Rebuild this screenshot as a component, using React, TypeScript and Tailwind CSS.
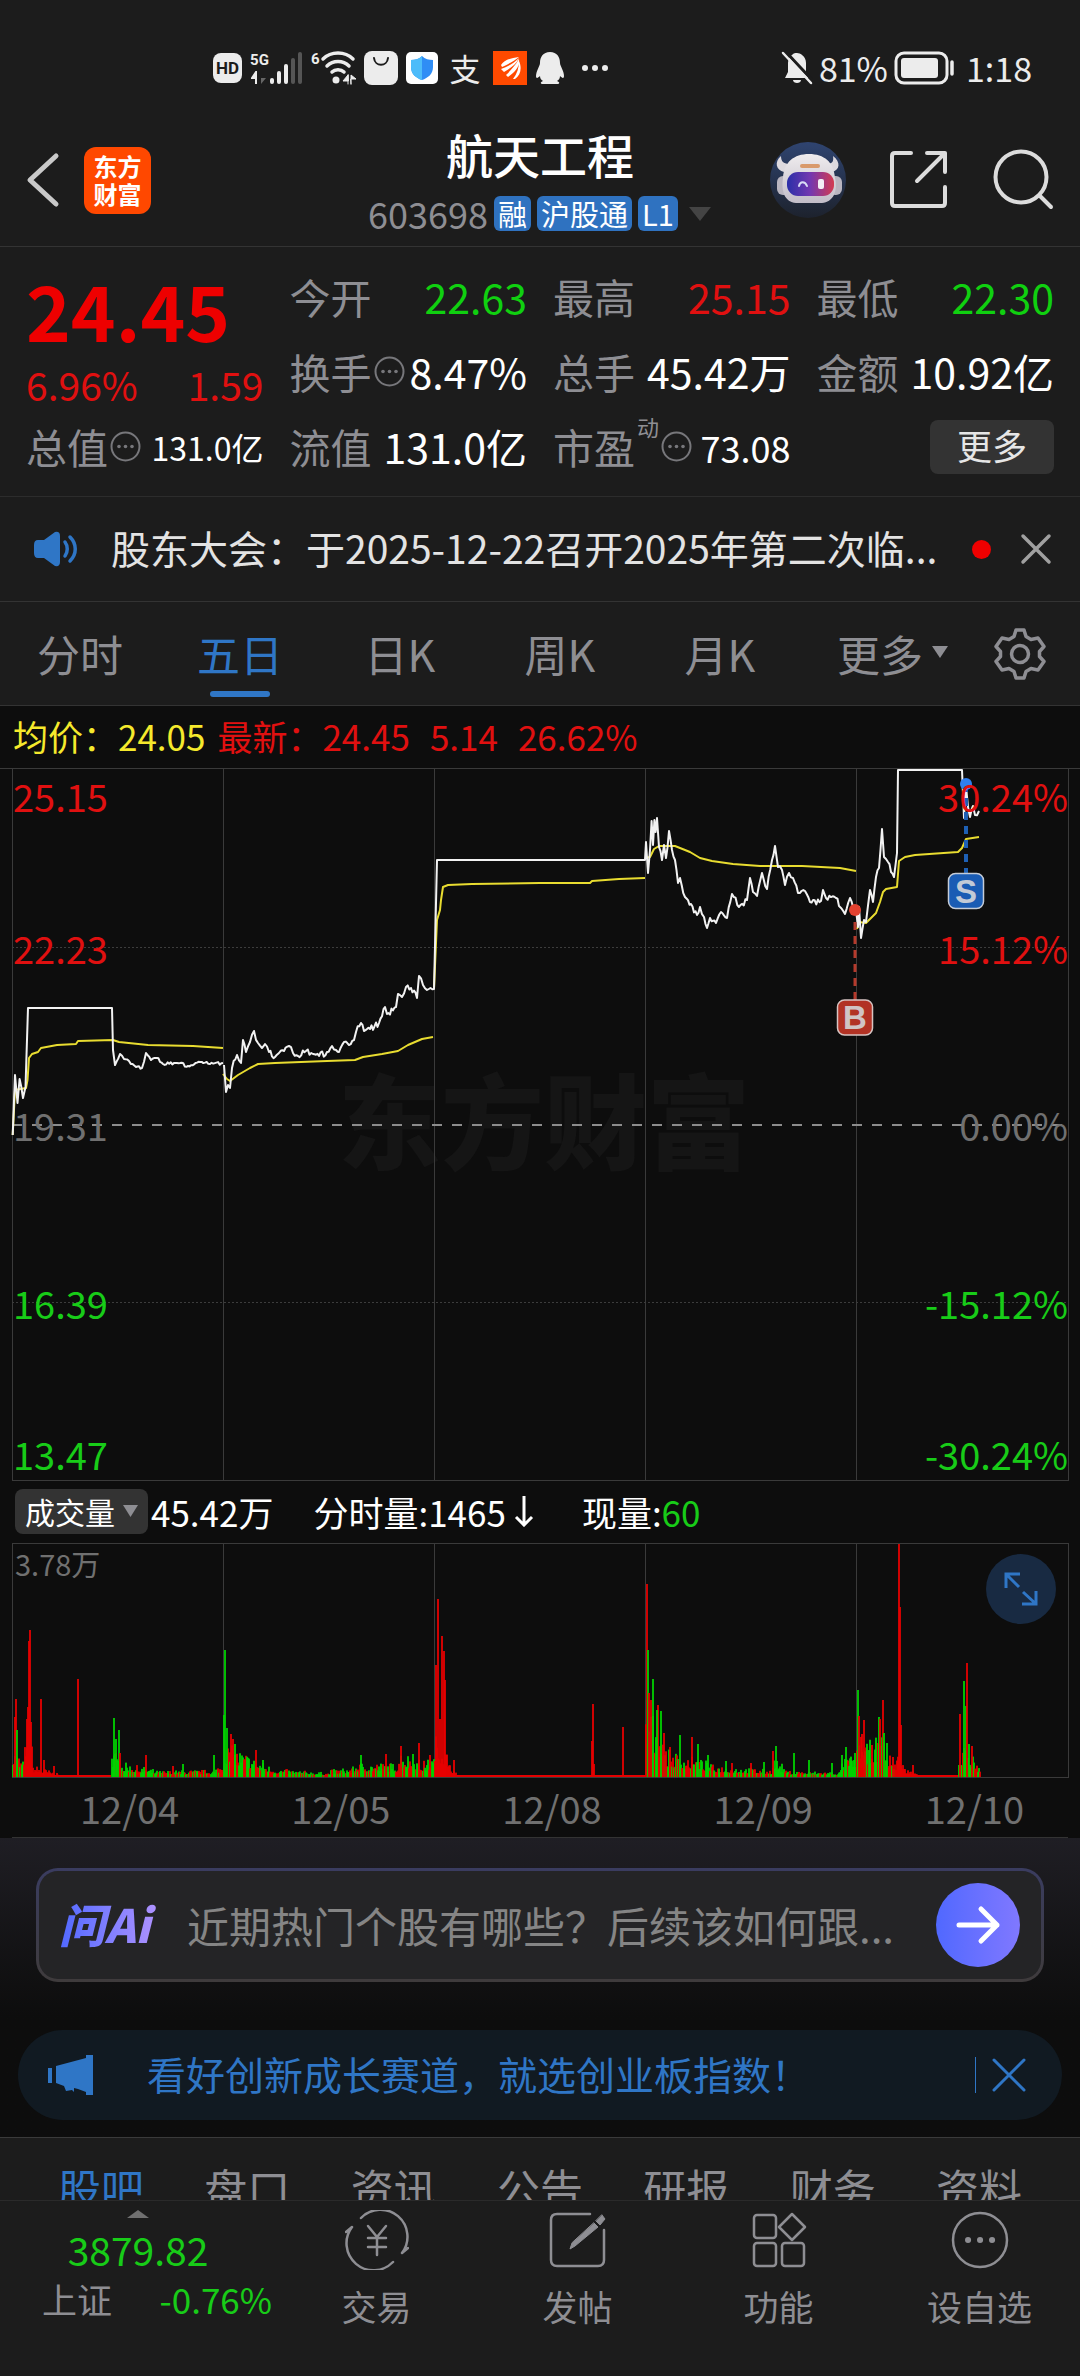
import { clsx } from "clsx";
import type { ReactNode, SVGProps } from "react";

type Point = [number, number];

const UP = "#e60000";
const DOWN = "#00d200";

// Small deterministic generator so the intraday noise is stable between renders
const createRandom = (seed: number) => {
  let s = seed;
  return () => {
    s = (s * 16807) % 2147483647;
    return s / 2147483647;
  };
};

/* ------------------------------ chart data ------------------------------ */

const PRICE_DAYS: Point[][] = [
  [[12.7, 367], [15, 307], [17.5, 335], [19.6, 311], [23, 330], [25.5, 319], [28, 240], [112, 240], [113, 282], [115, 297], [120, 286], [124, 291], [129, 293], [136, 299], [142, 300], [146, 285], [151, 292], [157, 290], [163, 296], [177, 295], [188, 298], [200, 294], [210, 296], [223, 295]],
  [[224, 297], [226, 324], [228, 317], [230, 320], [232, 300], [237, 287], [241, 295], [243, 272], [246, 284], [250, 274], [254, 263], [258, 275], [262, 280], [265, 276], [269, 284], [275, 289], [279, 285], [284, 283], [289, 278], [293, 285], [298, 288], [306, 283], [313, 286], [319, 288], [327, 284], [332, 278], [336, 282], [339, 284], [344, 274], [349, 277], [354, 272], [356, 264], [361, 255], [364, 263], [370, 261], [379, 255], [385, 239], [387, 246], [396, 239], [398, 226], [402, 229], [406, 219], [411, 220], [417, 230], [419, 208], [423, 217], [427, 222], [434, 221], [437, 92], [645, 92], [646, 74], [648, 105], [650, 82], [651.6, 53], [653, 77], [654.4, 52], [655.6, 64], [657, 50], [659, 79], [662, 92], [664, 77], [666, 90], [669, 63], [672, 82], [675, 92], [678, 115], [680, 110], [685, 129], [691, 136], [697, 147], [700, 139], [704, 149], [707, 160], [710, 150], [716, 155], [721, 144], [727, 150], [732, 126], [739, 139], [747, 132], [750, 110], [753, 124], [757, 128], [762, 105], [767, 121], [772, 92], [775, 78], [778, 99], [782, 102], [785, 117], [789, 105], [793, 110], [798, 125], [805, 123], [810, 134], [821, 133], [823, 122], [826, 130], [836, 130], [845, 146], [850, 130], [853, 139], [856, 142], [858, 159], [859, 139], [861, 170], [864, 152], [866, 154], [870, 122], [873, 134], [876, 109], [879, 100], [882, 61], [884, 89], [888, 94], [891, 104], [894, 109], [897, 85], [898, 2], [962, 2], [964, 50], [966, 18], [968, 39], [970, 49], [973, 38], [975, 47], [979, 43]],
];

const AVERAGE_DAYS: Point[][] = [
  [[12.7, 367], [15, 322], [26, 320], [27.5, 312], [29, 290], [32, 286], [38, 284], [41, 280], [57, 277], [76, 276], [78, 273], [113, 272], [119, 274], [148, 277], [193, 278], [223, 280]],
  [[223, 306], [227, 311], [230, 313], [238, 307], [250, 300], [258, 296], [275, 295], [327, 293], [355, 292], [363, 289], [382, 286], [398, 283], [408, 277], [422, 271], [433, 269]],
  [[434, 221], [437, 152], [440, 142], [441, 132], [443, 119], [448, 117], [472, 116], [540, 115], [590, 115], [592, 113], [619, 111], [645, 110]],
  [[645, 90], [650, 89], [654, 81], [659, 78], [675, 78], [690, 84], [700, 90], [712, 93], [733, 96], [760, 98], [802, 98], [840, 100], [856, 103]],
  [[857, 161], [859, 154], [866, 155], [876, 145], [880, 134], [883, 124], [886, 121], [897, 119], [899, 93], [905, 89], [915, 87], [958, 84], [962, 80], [966, 71], [979, 69]],
];

// from x, to x, start height, end height, share of rising minutes
const VOLUME_RANGES: [number, number, number, number, number][] = [
  [12, 23, 30, 14, 0.4], [23, 32, 30, 30, 1], [32, 58, 12, 3, 1], [58, 110, 2, 2, 1],
  [111, 121, 26, 18, 0.2], [121, 155, 14, 7, 0.4], [155, 215, 6, 7, 0.5], [215, 224, 9, 14, 0.5],
  [224, 252, 32, 20, 0.45], [252, 275, 18, 8, 0.4], [275, 330, 8, 4, 0.4], [330, 355, 7, 10, 0.4],
  [355, 398, 14, 13, 0.5], [398, 420, 26, 16, 0.5], [420, 434, 14, 20, 0.5], [434, 447, 40, 25, 1],
  [447, 456, 14, 5, 1], [456, 645, 2, 2, 1], [645, 664, 70, 40, 0.5], [664, 710, 26, 14, 0.5],
  [710, 772, 12, 7, 0.5], [772, 785, 20, 9, 0.4], [785, 840, 6, 5, 0.4], [840, 857, 14, 26, 0.3],
  [857, 868, 50, 26, 0.6], [868, 885, 34, 40, 0.6], [885, 896, 24, 14, 0.5], [896, 903, 30, 16, 1],
  [903, 918, 9, 4, 1], [918, 958, 2, 2, 1], [958, 968, 24, 34, 0.4], [968, 980, 26, 8, 0.5],
];

// x, height, rising
const VOLUME_SPIKES: [number, number, boolean][] = [
  [14, 60, true], [15, 78, true], [16, 47, false], [26, 58, true], [27, 70, true], [28, 136, true], [29, 147, true], [30, 55, true],
  [40, 78, true], [43, 17, true], [53, 11, true], [77, 98, true], [113, 59, false], [115, 38, false], [118, 47, false], [119, 24, true],
  [145, 22, true], [172, 11, true], [182, 13, false], [213, 22, false], [223, 62, false], [224, 127, false], [226, 49, false],
  [230, 43, true], [232, 38, true], [234, 33, false], [255, 27, true], [262, 17, false], [360, 22, false], [385, 23, true],
  [400, 31, true], [412, 23, false], [418, 34, true], [429, 22, true], [435, 112, true], [437, 178, true], [439, 58, true],
  [441, 141, true], [443, 126, true], [444, 97, true], [453, 17, true], [592, 73, true], [593, 13, true], [591, 36, true],
  [622, 50, true], [646, 193, true], [647, 127, false], [648, 84, true], [650, 77, true], [652, 98, false], [657, 72, true],
  [656, 67, false], [660, 66, false], [663, 44, true], [669, 30, true], [679, 42, false], [691, 40, true], [697, 33, false],
  [707, 22, false], [725, 16, false], [731, 14, true], [750, 14, true], [763, 15, false], [772, 26, true], [775, 31, false],
  [793, 24, false], [808, 17, false], [831, 14, false], [841, 22, false], [845, 30, false], [857, 87, false], [858, 61, true],
  [863, 57, true], [861, 43, true], [871, 32, true], [878, 60, false], [879, 58, true], [882, 77, true], [883, 44, false],
  [886, 34, false], [892, 20, true], [898, 233, true], [899, 170, true], [900, 52, true], [912, 12, true], [959, 63, true],
  [963, 96, false], [965, 71, false], [966, 114, true], [968, 33, false], [971, 31, true],
];

const buildPrice = (points: Point[]) => {
  const rand = createRandom(42);
  const out: Point[] = [];
  points.forEach((p, i) => {
    out.push(p);
    const next = points[i + 1];
    if (!next) return;
    const dx = next[0] - p[0];
    if (dx < 3 || dx > 50) return;
    const swing = p[0] < 223 ? 3 : 6;
    const steps = Math.floor(dx / 1.5);
    for (let k = 1; k < steps; k++) {
      const t = k / steps;
      out.push([p[0] + dx * t, p[1] + (next[1] - p[1]) * t + (rand() - 0.5) * swing]);
    }
  });
  return out;
};

const toPath = (points: Point[]) =>
  points.map(([x, y], i) => `${i ? "L" : "M"}${x.toFixed(1)} ${y.toFixed(1)}`).join("");

const buildVolume = () => {
  const rand = createRandom(7);
  const bars: [number, number, boolean][] = [];
  VOLUME_RANGES.forEach(([x0, x1, h0, h1, up]) => {
    for (let x = x0; x < x1; x += 1) {
      const peak = h0 + ((h1 - h0) * (x - x0)) / (x1 - x0);
      const r = rand();
      bars.push([x, peak <= 2 ? 2 : Math.max(2, peak * (0.4 + r * r * 0.7)), rand() < up]);
    }
  });
  return [...bars, ...VOLUME_SPIKES];
};

const pricePaths = PRICE_DAYS.map((d) => toPath(buildPrice(d)));
const averagePaths = AVERAGE_DAYS.map(toPath);
const volumeBars = buildVolume();
const DAY_LINES = [12, 223, 434, 645, 856, 1068];

/* -------------------------------- icons --------------------------------- */

const Stroke = ({ children, ...props }: SVGProps<SVGSVGElement>) => (
  <svg fill="none" stroke="currentColor" strokeLinecap="round" strokeLinejoin="round" aria-hidden="true" {...props}>
    {children}
  </svg>
);

const InfoDots = () => (
  <svg className="h-[31px] w-[31px] shrink-0" viewBox="0 0 31 31" aria-hidden="true">
    <circle cx="15.5" cy="15.5" r="14" fill="none" stroke="#77777b" strokeWidth="2" />
    <circle cx="9" cy="15.5" r="1.8" fill="#77777b" />
    <circle cx="15.5" cy="15.5" r="1.8" fill="#77777b" />
    <circle cx="22" cy="15.5" r="1.8" fill="#77777b" />
  </svg>
);

const DataArrows = () => (
  <svg className="h-[14px] w-4" viewBox="0 0 16 14" aria-hidden="true">
    <path d="M5 1V13M5 1L1 7H5Z" fill="#ececec" stroke="#ececec" strokeWidth="2" />
    <path d="M10 1V13L15 7H10Z" fill="#666" />
  </svg>
);

const SignalIcon = () => (
  <svg className="h-9 w-[34px]" viewBox="16 0 34 36" fill="#ececec" aria-hidden="true">
    <rect x="17" y="28" width="4" height="6" rx="2" />
    <rect x="24" y="21" width="4" height="13" rx="2" />
    <rect x="31" y="14" width="4" height="20" rx="2" />
    <rect x="38" y="8" width="4" height="26" rx="2" fill="#555" />
    <rect x="45" y="2" width="4" height="32" rx="2" fill="#555" />
  </svg>
);

const WifiIcon = () => (
  <svg className="h-9 w-[36px]" viewBox="0 0 36 36" fill="none" stroke="#ececec" strokeWidth="3.5" strokeLinecap="round" aria-hidden="true">
    <path d="M3 9C11 1 25 1 33 9" />
    <path d="M7 16C13 10 23 10 29 16" />
    <path d="M12 22C15 19 21 19 24 22" />
    <circle cx="16" cy="30" r="3.5" fill="#ececec" stroke="none" />
    <path d="M28 25V34M28 25L23 31H28ZM31 34V25L36 29H31Z" fill="#ececec" strokeWidth="1" />
  </svg>
);

const BagIcon = () => (
  <svg className="h-[34px] w-[34px]" viewBox="0 0 34 34" aria-hidden="true">
    <rect width="34" height="34" rx="8" fill="#ececec" />
    <path d="M10 7C11 16 23 16 24 7" fill="none" stroke="#1c1c1c" strokeWidth="2" strokeLinecap="round" />
  </svg>
);

const ShieldIcon = () => (
  <svg className="h-8 w-8" viewBox="0 0 32 32" aria-hidden="true">
    <rect width="32" height="32" rx="5" fill="#fff" />
    <path d="M16 4C19 7 23 8 27 8V15C27 22 22 26 16 28C10 26 5 22 5 15V8C9 8 13 7 16 4Z" fill="#2f8df5" />
    <path d="M16 4C13 7 9 8 5 8V15C5 22 10 26 16 28Z" fill="#4dbcfa" />
  </svg>
);

const FlameIcon = () => (
  <svg className="h-[34px] w-[34px]" viewBox="0 0 34 34" aria-hidden="true">
    <rect width="34" height="34" fill="#ff4a00" />
    <path d="M8 14C11 9 18 7 26 6C22 9 18 12 9 16ZM8 18C14 16 20 13 26 7C23 14 16 18 11 21ZM13 24C17 20 22 15 26 8C27 16 22 21 15 26ZM20 28C24 23 26 17 26 10C29 16 28 24 22 28Z" fill="#fff" />
  </svg>
);

const PenguinIcon = () => (
  <svg className="h-8 w-[30px]" viewBox="0 0 30 32" fill="#ececec" aria-hidden="true">
    <path d="M15 0C8 0 5 5 5 11C5 14 1 19 1 24C1 27 3 26 5 24C5 26 6 28 8 29C5 30 5 32 8 32H22C25 32 25 30 22 29C24 28 25 26 25 24C27 26 29 27 29 24C29 19 25 14 25 11C25 5 22 0 15 0Z" />
  </svg>
);

const MuteBellIcon = () => (
  <svg className="h-9 w-8" viewBox="0 0 32 36" aria-hidden="true">
    <path d="M16 3C19 3 25 6 25 13V22L28 28H4L7 22V13C7 9 9 6 11 5C13 3 14 3 16 3Z" fill="#ececec" />
    <path d="M12 30H20C20 34 12 34 12 30Z" fill="#ececec" />
    <path d="M4 1L32 31" stroke="#1c1c1c" strokeWidth="3" />
    <path d="M2 3L30 33" stroke="#ececec" strokeWidth="2.5" strokeLinecap="round" />
  </svg>
);

const BatteryIcon = () => (
  <svg className="h-[34px] w-[62px]" viewBox="0 0 62 34" aria-hidden="true">
    <rect x="2" y="2" width="51" height="30" rx="8" fill="none" stroke="#ececec" strokeWidth="3" />
    <rect x="7" y="7" width="37" height="20" rx="3" fill="#ececec" />
    <path d="M58 11V23" stroke="#ececec" strokeWidth="3.5" strokeLinecap="round" />
  </svg>
);

const RobotAvatar = () => (
  <svg className="h-[76px] w-[76px]" viewBox="0 0 76 76" aria-hidden="true">
    <defs>
      <linearGradient id="sky" x1="0" y1="0" x2="0" y2="1">
        <stop offset="0" stopColor="#2f4470" />
        <stop offset="1" stopColor="#1d222d" />
      </linearGradient>
      <linearGradient id="visor" x1="0" y1="0" x2="1" y2="0">
        <stop offset="0" stopColor="#2b2fa8" />
        <stop offset="0.5" stopColor="#7438b0" />
        <stop offset="1" stopColor="#d33a50" />
      </linearGradient>
      <linearGradient id="shell" x1="0" y1="0" x2="0" y2="1">
        <stop offset="0" stopColor="#efecee" />
        <stop offset="1" stopColor="#c2bdc8" />
      </linearGradient>
    </defs>
    <circle cx="38" cy="38" r="38" fill="url(#sky)" />
    <path d="M11 14C4 20 6 28 14 30L20 22C14 22 11 20 11 14ZM63 14C71 20 70 28 62 30L56 22C62 22 64 20 63 14Z" fill="#ddd9de" />
    <rect x="7" y="34" width="13" height="19" rx="6" fill="#b9b5c0" />
    <rect x="59" y="34" width="13" height="19" rx="6" fill="#b9b5c0" />
    <path d="M13 36C14 20 24 12 39 12C54 12 64 20 65 36C68 50 63 60 52 61H26C15 60 11 50 13 36Z" fill="url(#shell)" />
    <rect x="30" y="22" width="20" height="4" rx="2" fill="#d99a6c" />
    <rect x="17" y="30" width="47" height="24" rx="11" fill="url(#visor)" />
    <path d="M29 44C30 39 35 39 37 44" fill="none" stroke="#d9dcf5" strokeWidth="2" strokeLinecap="round" />
    <rect x="48" y="37" width="6" height="10" rx="2" fill="#f3eef5" />
  </svg>
);

const GearIcon = () => (
  <Stroke className="h-[52px] w-[52px]" viewBox="0 0 52 52" strokeWidth="3.5">
    <path d="M22 2H30L32 8.5L37 11.5L44 10L50 18.5L45.5 23.5V28.5L50 33.5L44 42L37 40.500L32 43.5L30 50H22L20 43.5L15 40.5L8 42L2 33.5L6.5 28.5V23.5L2 18.5L8 10L15 11.5L20 8.5Z" />
    <circle cx="26" cy="26" r="8.5" />
  </Stroke>
);

/* ------------------------------- sections ------------------------------- */

const StatusBar = () => (
  <div className="flex h-[130px] items-center justify-between pt-[6px] pr-12 pl-[213px] text-[#ececec]">
    <div className="flex items-center gap-2">
      <span className="rounded-lg bg-[#ececec] px-[3px] font-['Roboto',sans-serif] text-[17px] leading-[30px] font-bold text-[#1c1c1c]">HD</span>
      <span className="flex items-center">
        <span className="flex flex-col items-center gap-[2px] font-['Roboto',sans-serif] text-[15px] leading-[18px] font-bold">
          5G
          <DataArrows />
        </span>
        <SignalIcon />
      </span>
      <span className="flex items-start">
        <span className="font-['Roboto',sans-serif] text-[15px] leading-[18px] font-bold">6</span>
        <WifiIcon />
      </span>
      <BagIcon />
      <ShieldIcon />
      <span className="px-1 text-[31px] leading-8">支</span>
      <FlameIcon />
      <PenguinIcon />
      <svg className="ml-2 h-2 w-7" viewBox="0 0 28 8" fill="#ececec" aria-hidden="true">
        <circle cx="4" cy="4" r="3" />
        <circle cx="14" cy="4" r="3" />
        <circle cx="24" cy="4" r="3" />
      </svg>
    </div>
    <div className="flex items-center gap-[6px] text-[34px] leading-none">
      <MuteBellIcon />
      <span>81%</span>
      <BatteryIcon />
      <span className="pl-1">1:18</span>
    </div>
  </div>
);

const Badge = ({ children }: { children: ReactNode }) => (
  <span className="rounded-md bg-[#2f72c0] px-1 text-[29px] leading-[35px] text-white">{children}</span>
);

const Header = () => (
  <header className="grid grid-cols-[1fr_auto_1fr] border-b border-[#333] px-[26px] pb-[15px]">
    <div className="flex h-[100px] items-center gap-6">
      <button type="button" aria-label="返回" className="text-[#c9c9c9]">
        <Stroke className="h-[56px] w-[34px]" viewBox="0 0 34 56" strokeWidth="5">
          <path d="M30 4L4 28L30 52" />
        </Stroke>
      </button>
      <div className="flex h-[67px] w-[67px] flex-col justify-center rounded-xl bg-[#ff4800] text-center text-2xl leading-7 font-bold text-white">
        <span>东方</span>
        <span>财富</span>
      </div>
    </div>
    <div className="flex flex-col items-center gap-[19px]">
      <h1 className="text-[47px] leading-[47px] font-medium text-white">航天工程</h1>
      <div className="flex items-center gap-[6px]">
        <span className="text-[36px] leading-[35px] text-[#8e8e93]">603698</span>
        <Badge>融</Badge>
        <Badge>沪股通</Badge>
        <Badge>L1</Badge>
        <svg className="ml-1 h-4 w-6" viewBox="0 0 24 16" aria-hidden="true">
          <path d="M1 1H23L12 15Z" fill="#444" />
        </svg>
      </div>
    </div>
    <div className="flex h-[100px] items-center justify-end gap-[43px] text-[#dcdcdc]">
      <button type="button" aria-label="智能助手">
        <RobotAvatar />
      </button>
      <button type="button" aria-label="分享">
        <Stroke className="h-[60px] w-[60px]" viewBox="0 0 60 60" strokeWidth="4">
          <path d="M22 3H6Q3 3 3 6V53Q3 56 6 56H53Q56 56 56 53V37" />
          <path d="M38 3H56V22M56 3L28 31" />
        </Stroke>
      </button>
      <button type="button" aria-label="搜索">
        <Stroke className="h-[62px] w-[62px]" viewBox="0 0 62 62" strokeWidth="4">
          <circle cx="29" cy="28" r="25.5" />
          <path d="M48 47L59 58" />
        </Stroke>
      </button>
    </div>
  </header>
);

interface QuoteProps {
  label: string;
  value: string;
  tone?: "up" | "down" | "flat";
  info?: boolean;
  note?: string;
  size?: "sm" | "md" | "lg";
}

const Quote = ({ label, value, tone = "flat", info, note, size = "lg" }: QuoteProps) => (
  <div className="flex h-[75px] items-center justify-between whitespace-nowrap">
    <span className="flex items-center gap-[2px] text-[41px] leading-none text-[#8e8e93]">
      {label}
      {note && <sup className="-mt-5 text-[22px] leading-none">{note}</sup>}
      {info && <InfoDots />}
    </span>
    <span
      className={clsx("leading-none", {
        "text-[32px]": size === "sm",
        "text-[36px]": size === "md",
        "text-[41px]": size === "lg",
        "text-[#e01010]": tone === "up",
        "text-[#10d010]": tone === "down",
        "text-white": tone === "flat",
      })}
    >
      {value}
    </span>
  </div>
);

const QuotePanel = () => (
  <section className="grid grid-cols-4 gap-x-[26px] border-b border-[#2c2c2c] px-[26px] py-3">
    <div>
      <div className="flex h-[100px] items-center text-[76px] leading-none font-bold text-[#ee0000]">24.45</div>
      <div className="flex h-[50px] items-center justify-between text-[39px] leading-none text-[#e01010]">
        <span>6.96%</span>
        <span>1.59</span>
      </div>
      <Quote label="总值" value="131.0亿" info size="sm" />
    </div>
    <div>
      <Quote label="今开" value="22.63" tone="down" />
      <Quote label="换手" value="8.47%" info />
      <Quote label="流值" value="131.0亿" />
    </div>
    <div>
      <Quote label="最高" value="25.15" tone="up" />
      <Quote label="总手" value="45.42万" />
      <Quote label="市盈" value="73.08" note="动" info size="md" />
    </div>
    <div>
      <Quote label="最低" value="22.30" tone="down" />
      <Quote label="金额" value="10.92亿" />
      <div className="flex h-[75px] items-center justify-end">
        <button type="button" className="rounded-lg bg-[#333] px-[27px] pb-1 text-[35px] leading-[50px] text-[#e6e6e6]">更多</button>
      </div>
    </div>
  </section>
);

const Notice = () => (
  <section className="flex h-[105px] items-center border-b border-[#333] pr-7 pl-[33px]">
    <svg className="h-9 w-[46px] shrink-0" viewBox="0 0 46 36" aria-hidden="true">
      <path d="M5 9H11L22 1Q27 0 27 5V31Q27 36 22 35L11 27H5Q1 27 1 22V14Q1 9 5 9Z" fill="#2f76c6" />
      <path d="M32 11C35 15 35 21 32 25M37 6C44 13 44 23 37 30" fill="none" stroke="#2f76c6" strokeWidth="3.5" strokeLinecap="round" />
    </svg>
    <p className="min-w-0 flex-1 truncate pb-1 pl-8 text-[39px] leading-[56px] text-[#e3e3e3]">
      股东大会：于2025-12-22召开2025年第二次临...
    </p>
    <span className="mx-[29px] h-[19px] w-[19px] shrink-0 rounded-full bg-[#f00000]" />
    <button type="button" aria-label="关闭公告" className="text-[#a0a0a0]">
      <Stroke className="h-[32px] w-[32px]" viewBox="0 0 32 32" strokeWidth="3.5">
        <path d="M3 3L29 29M29 3L3 29" />
      </Stroke>
    </button>
  </section>
);

const PERIODS = ["分时", "五日", "日K", "周K", "月K", "更多"];

const PeriodTabs = () => (
  <nav className="flex h-[104px] items-center border-b border-[#333]">
    {PERIODS.map((period) => {
      const active = period === "五日";
      return (
        <button
          key={period}
          type="button"
          className={clsx("relative h-full flex-1 text-[43px] leading-none", active ? "text-[#2f76c6]" : "text-[#8e8e93]")}
        >
          {period}
          {period === "更多" && (
            <svg className="absolute top-11 right-3 h-3 w-4" viewBox="0 0 16 12" aria-hidden="true">
              <path d="M0 0H16L8 12Z" fill="#8e8e93" />
            </svg>
          )}
          {active && <span className="absolute bottom-2 left-1/2 h-[6px] w-[60px] -translate-x-1/2 rounded-full bg-[#2f76c6]" />}
        </button>
      );
    })}
    <button type="button" aria-label="设置" className="flex w-[120px] justify-center text-[#8e8e93]">
      <GearIcon />
    </button>
  </nav>
);

const PriceChart = () => (
  <svg className="block h-auto w-full" viewBox="0 0 1080 713" fill="none" role="img" aria-label="五日走势">
    <text x="544" y="394" textAnchor="middle" fontSize="103" fontWeight="900" fill="#151515">东方财富</text>
    <path d="M0 0.5H1080M12 712.5H1068" stroke="#3a3a3a" />
    {DAY_LINES.map((x) => (
      <path key={x} d={`M${x + 0.5} 0V713`} stroke="#3a3a3a" />
    ))}
    <path d="M12 179.5H1068M12 534.5H1068" stroke="#3c3c3c" strokeDasharray="2 2" />
    <path d="M12 357H1068" stroke="#8c8c8c" strokeWidth="2" strokeDasharray="10 10" />
    {averagePaths.map((d) => (
      <path key={d} d={d} stroke="#e8dc30" strokeWidth="2" strokeLinejoin="round" />
    ))}
    {pricePaths.map((d) => (
      <path key={d} d={d} stroke="#f2f2f2" strokeWidth="2" strokeLinejoin="round" />
    ))}

    {/* Trade markers */}
    <circle cx="855" cy="142" r="6" fill="#e2412f" />
    <path d="M855 154V232" stroke="#b53a2c" strokeWidth="3" strokeDasharray="8 6" />
    <rect x="837.5" y="232" width="35" height="35" rx="7" fill="#b23224" stroke="#d6c4c2" strokeWidth="1.5" />
    <text x="855" y="261" textAnchor="middle" fontSize="33" fontWeight="700" fontFamily="Liberation Sans" fill="#d0c4c4">B</text>
    <path d="M966 16V105" stroke="#1e60b4" strokeWidth="4" strokeDasharray="8 6" />
    <circle cx="966" cy="16" r="6" fill="#2f7ff0" />
    <rect x="948.5" y="105.5" width="35" height="35" rx="7" fill="#1a5cb4" stroke="#c4ccd8" strokeWidth="1.5" />
    <text x="966" y="135" textAnchor="middle" fontSize="33" fontWeight="700" fontFamily="Liberation Sans" fill="#c2cad6">S</text>

    <g fontSize="38">
      <g fill="#e01010">
        <text x="13" y="44">25.15</text>
        <text x="13" y="196">22.23</text>
        <text x="1068" y="44" textAnchor="end">30.24%</text>
        <text x="1068" y="196" textAnchor="end">15.12%</text>
      </g>
      <g fill="#707070">
        <text x="13" y="373">19.31</text>
        <text x="1068" y="373" textAnchor="end">0.00%</text>
      </g>
      <g fill="#18cc18">
        <text x="13" y="551">16.39</text>
        <text x="13" y="702">13.47</text>
        <text x="1068" y="551" textAnchor="end">-15.12%</text>
        <text x="1068" y="702" textAnchor="end">-30.24%</text>
      </g>
    </g>
  </svg>
);

const VolumeChart = () => (
  <div className="relative">
    <svg className="block h-auto w-full" viewBox="0 0 1080 235" fill="none" role="img" aria-label="成交量">
      <path d="M12 0.5H1068M12 234.5H1068" stroke="#3a3a3a" />
      {DAY_LINES.map((x) => (
        <path key={x} d={`M${x + 0.5} 0V235`} stroke="#3a3a3a" />
      ))}
      {volumeBars.map(([x, h, up], i) => (
        <rect key={i} x={x} y={234 - h} width="2" height={h} fill={up ? UP : DOWN} opacity="0.9" />
      ))}
      <text x="15" y="33" fontSize="29" fill="#707070">3.78万</text>
    </svg>
    <button
      type="button"
      aria-label="全屏"
      className="absolute top-[11px] right-6 flex h-[70px] w-[70px] items-center justify-center rounded-full bg-[#182a42] text-[#2f76c6]"
    >
      <svg className="h-9 w-9" viewBox="0 0 36 36" fill="none" stroke="currentColor" strokeWidth="3" aria-hidden="true">
        <path d="M3 17V3H17M3 3L16 16M33 20V33H19M33 33L20 21" />
      </svg>
    </button>
  </div>
);

const DATES = ["12/04", "12/05", "12/08", "12/09", "12/10"];

const Charts = () => (
  <section className="bg-[#0d0d0d]">
    <div className="flex h-[62px] items-center pb-1 pl-[13px] text-[35px] leading-none text-[#e01010]">
      <span className="text-[#f5e92c]">均价：24.05</span>
      <span className="pl-3">最新：24.45</span>
      <span className="pl-5">5.14</span>
      <span className="pl-5">26.62%</span>
    </div>
    <PriceChart />
    <div className="flex h-[62px] items-center pb-[2px] pl-[15px] text-[35px] leading-none text-white">
      <button type="button" className="flex items-center gap-2 rounded-lg bg-[#333] py-[7px] pr-[10px] pl-[10px] text-[30px] leading-[31px]">
        成交量
        <svg className="h-3 w-[15px]" viewBox="0 0 15 12" aria-hidden="true">
          <path d="M0 0H15L7.5 12Z" fill="#8e8e93" />
        </svg>
      </button>
      <span className="pl-[3px]">45.42万</span>
      <span className="flex items-center pl-10">
        分时量:1465
        <svg className="ml-2 h-8 w-5" viewBox="0 0 20 32" fill="none" stroke="#fff" strokeWidth="3" aria-hidden="true">
          <path d="M10 1V30M2 22L10 30L18 22" />
        </svg>
      </span>
      <span className="pl-12">
        现量:<span className="text-[#18cc18]">60</span>
      </span>
    </div>
    <VolumeChart />
    <div className="mx-3 grid h-[60px] grid-cols-5 items-center border-b border-[#333] text-center text-[38px] leading-none text-[#707070]">
      {DATES.map((date) => (
        <span key={date} className="pl-6">{date}</span>
      ))}
    </div>
  </section>
);

const Promos = () => (
  <section className="bg-gradient-to-b from-[#1f1e24] via-[#0d0d0d] via-60% to-[#0d0d0d] pt-[30px] pb-[17px]">
    <div className="mx-9 rounded-[22px] bg-gradient-to-b from-[#3a3c60] to-[#3f3b3c] p-[3px]">
      <div className="flex h-[108px] items-center rounded-[19px] bg-[#242426] pr-[21px] pl-5">
        <label
          htmlFor="ask"
          className="w-[104px] shrink-0 bg-gradient-to-r from-[#5068ff] to-[#b494ff] bg-clip-text pb-1 text-[46px] leading-[60px] font-black text-transparent italic"
        >
          问Ai
        </label>
        <input
          id="ask"
          className="min-w-0 flex-1 bg-transparent pl-6 text-[42px] leading-[60px] outline-none placeholder:text-[#858585]"
          placeholder="近期热门个股有哪些？后续该如何跟..."
        />
        <button
          type="button"
          aria-label="发送"
          className="flex h-[84px] w-[84px] shrink-0 items-center justify-center rounded-full bg-gradient-to-r from-[#5068ff] to-[#8078ff] text-white"
        >
          <Stroke className="h-10 w-[46px]" viewBox="0 0 46 40" strokeWidth="5">
            <path d="M4 20H42M26 4L42 20L26 36" />
          </Stroke>
        </button>
      </div>
    </div>
    <div className="mx-[18px] mt-12 flex h-[90px] items-center rounded-full bg-[#111a22] pr-[36px] pl-[30px] text-[#2f76c6]">
      <svg className="h-10 w-[46px] shrink-0" viewBox="0 0 46 40" fill="currentColor" aria-hidden="true">
        <path d="M0 13H4V28H0ZM8 11L38 3V0H45V40H38V37L30 34L26 33V37L24 35L18 36L16 31L8 28Z" />
      </svg>
      <a href="#index" className="flex-1 pb-1 pl-[53px] text-[39px] leading-[56px]">看好创新成长赛道，就选创业板指数！</a>
      <span className="mr-4 h-9 w-px bg-[#2f76c6]" />
      <button type="button" aria-label="关闭广告">
        <Stroke className="h-[34px] w-[34px]" viewBox="0 0 34 34" strokeWidth="3">
          <path d="M2 2L32 32M32 2L2 32" />
        </Stroke>
      </button>
    </div>
  </section>
);

const SECTIONS = ["股吧", "盘口", "资讯", "公告", "研报", "财务", "资料"];

const SectionTabs = () => (
  <nav className="flex h-[63px] items-start justify-between overflow-hidden border-t border-[#3a3a3a] px-[58px] pt-7 text-[43px] leading-none text-[#8e8e93]">
    {SECTIONS.map((name, i) => (
      <button key={name} type="button" className={clsx("shrink-0", i === 0 && "text-[#2f76c6]")}>
        {name}
      </button>
    ))}
  </nav>
);

const ACTIONS: { label: string; icon: ReactNode }[] = [
  {
    label: "交易",
    icon: (
      <>
        <path d="M16 8A27 27 0 0 1 57 43L63 38M48 52A27 27 0 0 1 7 17L1 22" />
        <path d="M23 16L32 27L41 16M32 27V45M23 28H41M23 37H41" />
      </>
    ),
  },
  {
    label: "发帖",
    icon: (
      <>
        <path d="M44 4H11Q5 4 5 10V50Q5 56 11 56H52Q58 56 58 50V20" />
        <path d="M56 5L59 9L54 15L50 11ZM48 13L52 17L29 36L24 39L26 33Z" fill="currentColor" strokeWidth="1" />
      </>
    ),
  },
  {
    label: "功能",
    icon: (
      <>
        <rect x="7" y="5" width="22" height="23" rx="3" />
        <path d="M45 4L58 17L45 30L32 17Z" />
        <rect x="7" y="33" width="22" height="23" rx="3" />
        <rect x="35" y="33" width="22" height="23" rx="3" />
      </>
    ),
  },
  {
    label: "设自选",
    icon: (
      <>
        <circle cx="32" cy="30" r="27" />
        <path d="M20 30H20.1M32 30H32.1M44 30H44.1" strokeWidth="6" />
      </>
    ),
  },
];

const BottomBar = () => (
  <footer className="flex h-[176px] border-t border-[#2a2a2a] text-[35px] leading-none">
    <button type="button" className="flex w-[276px] flex-col items-center pt-[9px] text-[#18cc18]">
      <svg className="h-2 w-[22px]" viewBox="0 0 22 8" aria-hidden="true">
        <path d="M11 0L22 8H0Z" fill="#707070" />
      </svg>
      <span className="pt-3 text-[39px]">3879.82</span>
      <span className="flex w-full items-center justify-between pt-3 pr-1 pl-[42px]">
        <span className="text-[#8e8e93]">上证</span>
        <span>-0.76%</span>
      </span>
    </button>
    {ACTIONS.map(({ label, icon }) => (
      <button key={label} type="button" className="flex flex-1 flex-col items-center gap-[18px] pt-[9px] text-[#8e8e93]">
        <Stroke className="h-[60px] w-16" viewBox="0 0 64 60" strokeWidth="2.5">
          {icon}
        </Stroke>
        {label}
      </button>
    ))}
  </footer>
);

export default function App() {
  return (
    <div className="min-h-screen bg-[#1c1c1c] font-['Noto_Sans_CJK_SC',sans-serif]">
      <StatusBar />
      <Header />
      <QuotePanel />
      <Notice />
      <PeriodTabs />
      <Charts />
      <Promos />
      <SectionTabs />
      <BottomBar />
    </div>
  );
}
